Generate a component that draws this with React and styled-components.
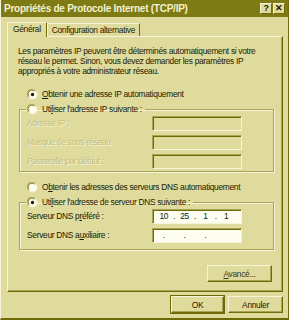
import React from 'react';
import styled, { createGlobalStyle } from 'styled-components';

const FACE = '#dedb9d';
const DARK = '#6e6a08';
const MID = '#a8a456';
const LIGHT = '#f6f4d8';
const DIS = '#c2be80';

const Global = createGlobalStyle`
  html, body { margin: 0; padding: 0; background: ${FACE}; }
  * { box-sizing: border-box; }
`;

const Window = styled.div`
  width: 289px;
  height: 320px;
  background: ${FACE};
  border-left: 1px solid ${LIGHT};
  border-right: 1px solid ${DARK};
  border-bottom: 2px solid ${DARK};
  font-family: "Liberation Sans", Arial, sans-serif;
  font-size: 8.4px;
  letter-spacing: -0.3px;
  color: #1c1a00;
  display: flex;
  flex-direction: column;
`;

const TitleBar = styled.div`
  height: 17px;
  background: #7f7b14;
  display: flex;
  align-items: center;
  padding: 0 3px 0 3px;
  color: #f3f1cc;
  font-weight: bold;
  font-size: 10px;
  letter-spacing: -0.25px;
`;

const Title = styled.div`
  flex: 1;
`;

const CapButton = styled.div`
  width: 12px;
  height: 11px;
  margin-left: 1px;
  background: ${FACE};
  border: 1px solid;
  border-color: ${LIGHT} ${DARK} ${DARK} ${LIGHT};
  color: #1c1a00;
  font-size: 9px;
  font-weight: bold;
  line-height: 9px;
  text-align: center;
`;

const Body = styled.div`
  flex: 1;
  padding: 4px 5px 0 6px;
  display: flex;
  flex-direction: column;
`;

const Tabs = styled.div`
  display: flex;
  align-items: flex-end;
  height: 15px;
`;

const Tab = styled.div`
  height: ${p => (p.$active ? 15 : 13)}px;
  padding: 0 ${p => (p.$active ? 5 : 4)}px;
  border: 1px solid;
  border-bottom: none;
  border-color: ${LIGHT} ${DARK} transparent ${LIGHT};
  background: ${FACE};
  line-height: 12px;
  margin-bottom: ${p => (p.$active ? -1 : 0)}px;
  position: relative;
  z-index: ${p => (p.$active ? 1 : 0)};
`;

const Panel = styled.div`
  height: 256px;
  border: 1px solid;
  border-color: ${LIGHT} ${DARK} ${DARK} ${LIGHT};
  box-shadow: inset -1px -1px 0 ${MID};
  padding: 9px 10px 0 10px;
  display: flex;
  flex-direction: column;
`;

const Intro = styled.p`
  margin: 0;
  line-height: 10px;
  white-space: nowrap;
`;

const RadioLine = styled.label`
  display: flex;
  align-items: center;
  gap: 4px;
  height: 12px;
  white-space: nowrap;
  padding-left: ${p => (p.$inset ? 0 : 9)}px;
  margin-top: ${p => p.$mt || 0}px;
  u { text-decoration: underline; }
`;

const Group = styled.fieldset`
  margin: ${p => p.$mt || 0}px 0 0 1px;
  padding: 0 7px ${p => p.$pb || 2}px 7px;
  width: 255px;
  border: 1px solid ${MID};
  box-shadow: 1px 1px 0 ${LIGHT}, inset 1px 1px 0 ${LIGHT};
  display: flex;
  flex-direction: column;
  gap: 3px;
  legend {
    padding: 0 3px 0 1px;
    margin-left: -1px;
  }
`;

const Row = styled.div`
  display: grid;
  grid-template-columns: 125px 90px;
  align-items: center;
  height: 16px;
  color: ${p => (p.$disabled ? DIS : 'inherit')};
  text-shadow: ${p => (p.$disabled ? `1px 1px 0 ${LIGHT}` : 'none')};
`;

const IpBox = styled.div`
  height: 15px;
  border: 1px solid;
  border-color: ${MID} ${LIGHT} ${LIGHT} ${MID};
  box-shadow: inset 1px 1px 0 ${DARK};
  background: ${p => (p.$disabled ? FACE : '#fdfdf0')};
  display: grid;
  grid-template-columns: repeat(4, 1fr);
  align-items: center;
  padding: 0 3px 0 2px;
  color: ${p => (p.$disabled ? DIS : '#1c1a00')};
  text-shadow: none;
`;

const Octet = styled.span`
  display: grid;
  grid-template-columns: 1fr 3px;
  text-align: center;
  &::after {
    content: '${p => (p.$last ? '' : '.')}';
    color: ${p => (p.$disabled ? '#cfcb86' : '#1c1a00')};
  }
`;

const Spacer = styled.div`
  flex: 1;
`;

const BtnRow = styled.div`
  display: flex;
  justify-content: flex-end;
  gap: 4px;
  padding: ${p => p.$pad || '0'};
`;

const Button = styled.button`
  width: ${p => p.$w || 55}px;
  height: 17px;
  padding: 0;
  background: ${FACE};
  font-family: inherit;
  font-size: 8.4px;
  letter-spacing: -0.3px;
  color: ${p => (p.$muted ? '#3c3a10' : '#1c1a00')};
  border: 1px solid;
  border-color: ${LIGHT} ${DARK} ${DARK} ${LIGHT};
  box-shadow: inset -1px -1px 0 ${MID}${p => (p.$default ? `, 0 0 0 1px ${DARK}` : '')};
  u { text-decoration: underline; }
`;

function Radio({ checked, disabled }) {
  return (
    <svg width="11" height="11" viewBox="0 0 12 12">
      <circle cx="6" cy="6" r="5.5" fill={LIGHT} />
      <path d="M1.5 9 A5 5 0 0 1 9 1.5" stroke={MID} strokeWidth="1" fill="none" />
      <path d="M2.4 8.2 A4 4 0 0 1 8.2 2.4" stroke={DARK} strokeWidth="1" fill="none" />
      <circle cx="6" cy="6" r="3.6" fill={disabled ? FACE : '#fdfdf0'} />
      {checked && <circle cx="6" cy="6" r="1.8" fill="#1c1a00" />}
    </svg>
  );
}

function IpField({ value, disabled }) {
  const parts = value || ['', '', '', ''];
  return (
    <IpBox $disabled={disabled}>
      {parts.map((v, i) => (
        <Octet key={i} $last={i === 3} $disabled={disabled}>{v}</Octet>
      ))}
    </IpBox>
  );
}

export default function App() {
  return (
    <>
      <Global />
      <Window>
        <TitleBar>
          <Title>Propriétés de Protocole Internet (TCP/IP)</Title>
          <CapButton>?</CapButton>
          <CapButton>✕</CapButton>
        </TitleBar>
        <Body>
          <Tabs>
            <Tab $active>Général</Tab>
            <Tab>Configuration alternative</Tab>
          </Tabs>
          <Panel>
            <Intro>
              Les paramètres IP peuvent être déterminés automatiquement si votre<br />
              réseau le permet. Sinon, vous devez demander les paramètres IP<br />
              appropriés à votre administrateur réseau.
            </Intro>
            <RadioLine $mt={12}>
              <Radio checked /> <span><u>O</u>btenir une adresse IP automatiquement</span>
            </RadioLine>
            <Group $mt={3}>
              <legend>
                <RadioLine $inset>
                  <Radio /> <span>Uti<u>l</u>iser l'adresse IP suivante :</span>
                </RadioLine>
              </legend>
              <Row $disabled>
                <span>Adresse IP :</span>
                <IpField disabled />
              </Row>
              <Row $disabled>
                <span>Masque de sous-réseau :</span>
                <IpField disabled />
              </Row>
              <Row $disabled>
                <span>Passerelle par défaut :</span>
                <IpField disabled />
              </Row>
            </Group>
            <RadioLine $mt={9}>
              <Radio /> <span>O<u>b</u>tenir les adresses des serveurs DNS automatiquement</span>
            </RadioLine>
            <Group $mt={3} $pb={6}>
              <legend>
                <RadioLine $inset>
                  <Radio checked /> <span>Uti<u>l</u>iser l'adresse de serveur DNS suivante :</span>
                </RadioLine>
              </legend>
              <Row>
                <span>Serveur DNS p<u>r</u>éféré :</span>
                <IpField value={['10', '25', '1', '1']} />
              </Row>
              <Row>
                <span>Serveur DNS a<u>u</u>xiliaire :</span>
                <IpField />
              </Row>
            </Group>
            <Spacer />
            <BtnRow $pad="0 0 9px 0">
              <Button $w={65} $muted><u>A</u>vancé...</Button>
            </BtnRow>
          </Panel>
          <BtnRow $pad="4px 0 0 0">
            <Button $default $w={53}>OK</Button>
            <Button $w={55}>Annuler</Button>
          </BtnRow>
        </Body>
      </Window>
    </>
  );
}
